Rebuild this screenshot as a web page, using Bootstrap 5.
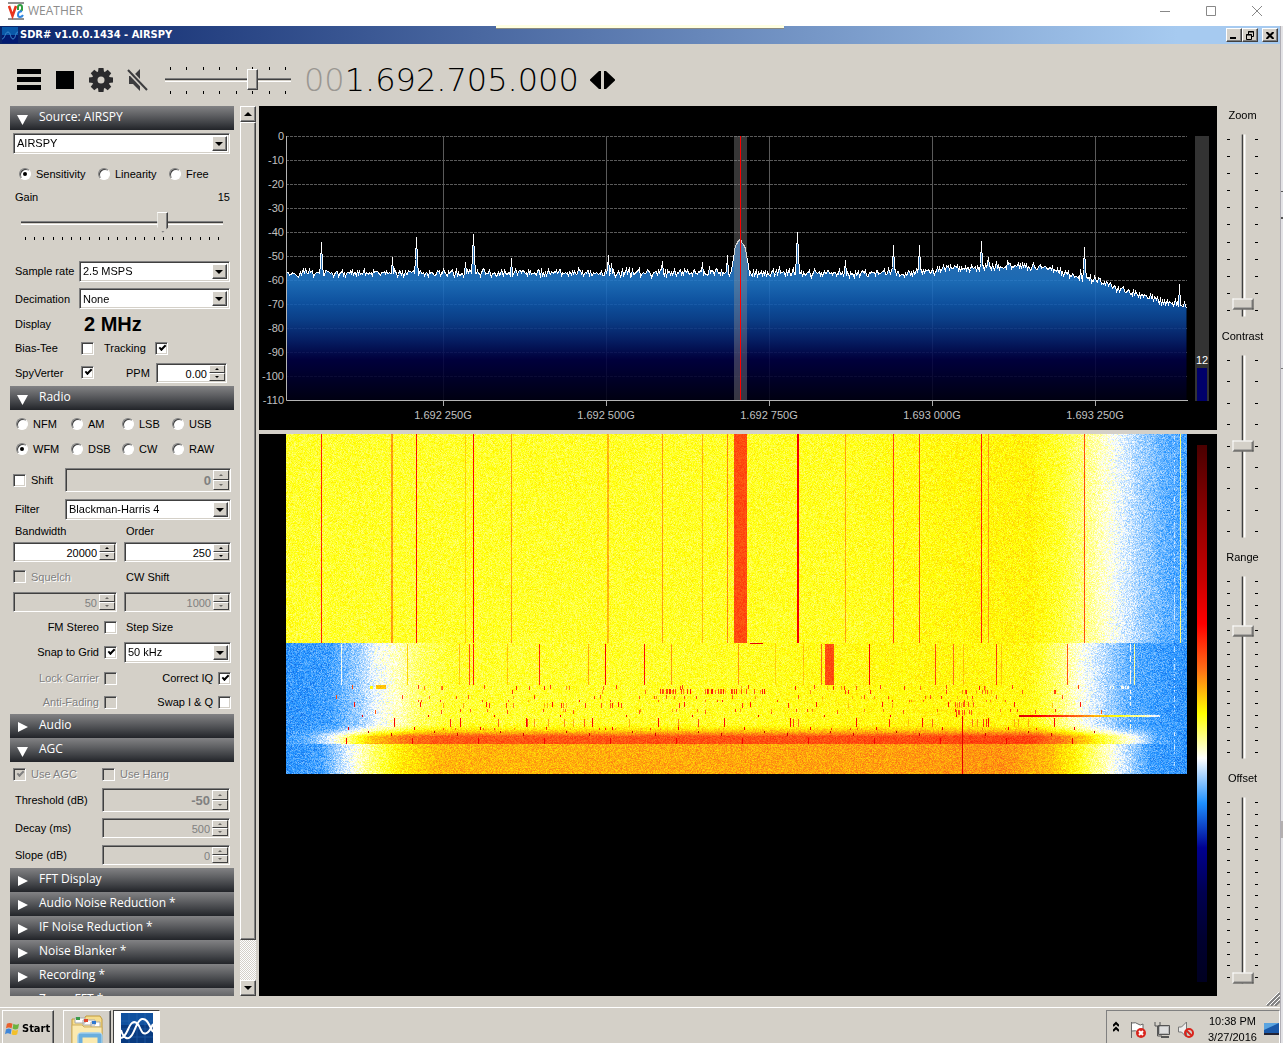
<!DOCTYPE html>
<html lang="en">
<head>
<meta charset="utf-8">
<meta name="viewport" content="width=device-width, initial-scale=1">
<title>WEATHER</title>
<link href="https://cdn.jsdelivr.net/npm/bootstrap@5.3.0/dist/css/bootstrap.min.css" rel="stylesheet">
<style>
:root{--face:#d4d0c8;--mid:#808080;--dark:#404040}
body{font:11px/14px "Liberation Sans",Arial,sans-serif;color:#000;background:var(--face);height:100vh;overflow:hidden}
button{padding:0;border:0;background:none;color:inherit}
.fit{min-width:0;min-height:0}
/* outer viewer window */
.viewer-bar{height:26px;background:#fff;color:#8c8c8c;padding:0 20px 4px 8px;font:12px/16px "Open Sans",sans-serif}
.viewer-bar button{width:46px;display:flex;justify-content:center}
.viewer-bar .wbtns{margin-right:-17px}
.notch{height:4px;width:288px;background:#ffffe1;border-bottom:1px solid #8a8a80;top:-1px;z-index:2}
.edge{width:3px;background:linear-gradient(#e3e3e6 165px,#555 165px 166px,#e3e3e6 166px 191px,#555 191px 193px,#e3e3e6 193px 342px,#777 342px 343px,#e3e3e6 343px 795px,#b4b0b0 795px 812px,#e3e3e6 812px);border-left:1px solid #b0aeb4}
/* application frame */
.app-bar{height:18px;background:linear-gradient(90deg,#0a246a,#a6caf0 92%);color:#fff;font:bold 11px/18px "DejaVu Sans Condensed","DejaVu Sans",sans-serif;padding:0 2px}
.raised{background:var(--face);border:1px solid;border-color:#fff var(--dark) var(--dark) #fff;box-shadow:inset -1px -1px var(--mid)}
.app-bar .raised{width:16px;height:14px;display:flex;align-items:center;justify-content:center}
.toolbar-row{height:62px;padding:10px 16px 0 16px}
.freq{font:200 32px/36px "DejaVu Sans Light","DejaVu Sans",sans-serif}
.freq .dim{color:#9a9792}
/* sliders */
.trk{appearance:none;-webkit-appearance:none;background:none;margin:0;padding:0;height:21px;display:block;width:100%}
.trk::-webkit-slider-runnable-track{height:4px;background:linear-gradient(#808080 1px,#404040 1px 2px,#d4d0c8 2px 3px,#fff 3px)}
.trk::-webkit-slider-thumb{-webkit-appearance:none;width:11px;height:21px;margin-top:-9px;background:var(--face);border:1px solid;border-color:#fff var(--dark) var(--dark) #fff;box-shadow:inset -1px -1px var(--mid)}
.trk.pointed::-webkit-slider-thumb{clip-path:polygon(0 0,100% 0,100% 75%,50% 100%,0 75%)}
.ticks{display:flex;justify-content:space-between}
.ticks i{display:block;background:#000;width:1px;height:3px}
.vol{width:126px}
.vol .ticks{padding:0 5px}
.side-sliders{width:63px;padding-right:12px}
.vgroup{height:221px}
.vgroup label{height:18px;line-height:18px;margin-bottom:10px}
.vtrack{height:182px;grid-template-columns:4px 23px 4px}
.vtrack .trk{width:182px;transform:rotate(-90deg);justify-self:center;align-self:center}
.vtrack.long{height:186px}
.vtrack.long .trk{width:186px}
.vtrack .trk::-webkit-slider-thumb{border-color:#fff #fff var(--dark) var(--dark);box-shadow:inset 1px -1px var(--mid)}
.vtrack .ticks{flex-direction:column;padding:5px 0}
.vtrack .ticks i{width:3px;height:1px}
/* side panel */
.side{width:224px;margin-left:10px}
.sect{height:24px;flex:none;display:flex;align-items:center;gap:11px;padding:0 7px 3px;color:#fff;font:12px/18px "Open Sans","Noto Sans",sans-serif;background:linear-gradient(#828284,#626366 35%,#404246 70%,#222429);width:100%}
.sect svg{width:11px;height:11px;margin-top:5px}
.pane{display:grid;grid-template-columns:minmax(0,1fr);padding:0 4px 0 3px;flex:none}
.pane>div{display:flex;align-items:center;min-height:0}
.src{grid-template-rows:26px 36px 10px 54px 30px 25px 26px 22px 27px}
.rad{grid-template-rows:28px 22px 40px 18px 25px 18px 31px 20px 30px 20px 32px 16px;padding:0 3px 4px 3px}
.agc{grid-template-rows:24px 28px 28px 26px}
.c1{width:104px;margin-right:7px;flex:none}
.lb{padding-left:2px;white-space:nowrap}
.lw66{width:66px}.lw52{width:52px}.lw89{width:89px}.lw68{width:68px}
.lppm{width:62px;padding-left:32px}
.ppm{margin-right:3px}
.off{color:#808080;text-shadow:1px 1px #fff}
.sunk{border:1px solid;border-color:#808080 #fff #fff #808080;box-shadow:inset 1px 1px #404040,inset -1px -1px var(--face);background:#fff}
.combo{position:relative;height:21px;flex:1 1 0;min-width:0}
.combo select{appearance:none;-webkit-appearance:none;border:0;background:none;font:inherit;color:#000;width:100%;height:100%;padding:0 20px 0 3px;display:block}
.combo::before{content:"";position:absolute;right:2px;top:2px;bottom:2px;width:15px;background:var(--face);border:1px solid;border-color:#fff var(--dark) var(--dark) #fff;box-shadow:inset -1px -1px var(--mid);pointer-events:none}
.combo::after{content:"";position:absolute;right:6px;top:8px;border:4px solid transparent;border-top-color:#000;border-bottom:0;pointer-events:none}
.spin{height:20px;flex:1 1 0;min-width:0;display:flex;padding:1px}
.spin.tall{height:24px}
.spin input{border:0;background:none;flex:1 1 0;min-width:0;text-align:right;font:inherit;padding:2px 2px 0 2px;color:#000}
.spin.tall input{font-weight:bold;font-size:13px}
.spin.dis{background:var(--face)}
.spin.dis input{color:#808080}
.spin div{width:16px;display:flex;flex-direction:column}
.spin button{flex:1;display:flex;align-items:center;justify-content:center;background:var(--face);border:1px solid;border-color:#fff var(--dark) var(--dark) #fff}
.spin button::before{content:"";border:2px solid transparent;border-bottom-color:#000;border-top:0}
.spin button+button::before{border:2px solid transparent;border-top-color:#000;border-bottom:0}
.spin.dis button::before{opacity:.5}
.cb,.rb{appearance:none;-webkit-appearance:none;margin:0;flex:none;display:block}
.cb{width:13px;height:13px;border:1px solid;border-color:#808080 #fff #fff #808080;box-shadow:inset 1px 1px #404040,inset -1px -1px var(--face);background:#fff}
.cb:disabled{background:var(--face)}
.cb:checked::before{content:"";display:block;width:7px;height:4px;margin:2px 0 0 3px;border:solid #000;border-width:0 0 2px 2px;transform:rotate(-45deg)}
.cb:disabled:checked::before{border-color:#808080}
.rb{width:12px;height:12px;border-radius:50%;background:#fff;border:1px solid;border-color:#808080 #fff #fff #808080;box-shadow:inset 1px 1px #404040}
.rb:checked::before{content:"";display:block;width:4px;height:4px;margin:3px;border-radius:50%;background:#000}
.opt{display:flex;align-items:center;gap:5px}
.track-opt{gap:9px;margin-left:10px}
.modes{display:grid!important;grid-template-columns:55px 51px 50px 1fr;padding-left:3px}
.gains{display:grid!important;grid-template-columns:79px 71px 1fr;padding-left:6px}
.big{font:bold 20px/24px "Liberation Sans",Arial,sans-serif;padding-left:5px}
.gain{padding:10px 7px 0 8px}
.sbar{width:16px;margin:0 3px 0 6px;background:repeating-conic-gradient(#fff 0 25%,var(--face) 0 50%) 0 0/2px 2px}
.sbar .raised{width:16px;display:flex;align-items:center;justify-content:center}
.sbar button{height:16px;flex:none}
.sthumb{height:818px;flex:0 1 auto}
/* displays */
.fall{background:#000;margin-top:4px;padding-left:27px}
.fall canvas{width:100%;display:block;image-rendering:pixelated}
.pal{width:10px;margin:11px 10px 14px 10px;background:linear-gradient(#4a0000,#750000,#9f0000,#c60000,#f00,#fe6d16,#ff0,#fff,#1e90ff,#000091,#000050,#000030,#000020)}
.spec{display:block;width:100%;height:auto;background:#000}
.spec text{fill:#c0c0c0;font:11px "Liberation Sans",Arial,sans-serif}
/* taskbar */
.foot{height:11px;position:relative}
.foot svg{position:absolute;right:0;bottom:1px}
.task{height:36px;border-top:1px solid #fff;padding:2px 0 0 2px;overflow:hidden}
.task>.raised{height:38px;flex:none}
.start{width:52px;font:bold 11px/36px "DejaVu Sans Condensed","DejaVu Sans",sans-serif;padding:0 2px;gap:2px}
.t1{width:48px;margin-left:9px}
.t2{width:47px;margin-left:2px;background:#fff;border:1px solid;border-color:#404040 #fff #fff #404040;height:38px}
.tray{height:38px;border:1px solid;border-color:#808080 #fff #fff #808080;gap:7px;padding-left:6px;width:174px}
.tray svg{margin-top:10px;flex:none}
.clock{line-height:16px;padding-top:2px;margin-left:6px}
</style>
</head>
<body class="d-flex flex-column">
<header class="viewer-bar d-flex align-items-center flex-shrink-0">
  <svg width="16" height="18" viewBox="0 0 16 18" aria-hidden="true"><path d="M0 1h16M0 17h16" stroke="#222" stroke-width="1"/><path d="M1 4l3.500 10L8 4" fill="none" stroke="#e8341c" stroke-width="2.500"/><path d="M10 8V5q0-2 2-2t2 2v3l-2 1" fill="none" stroke="#2f9e3f" stroke-width="2"/><path d="M14 9l-3 1q-1 1-1 3t2 2 3-2" fill="none" stroke="#2f86e0" stroke-width="2"/></svg>
  <span class="ms-1 me-auto">WEATHER</span>
  <span class="d-flex wbtns">
  <button aria-label="Minimize"><svg width="10" height="10"><path d="M0 5.500h10" stroke="#888"/></svg></button>
  <button aria-label="Maximize"><svg width="10" height="10"><path d="M.5.5h9v9h-9z" fill="none" stroke="#888"/></svg></button>
  <button aria-label="Close"><svg width="10" height="10"><path d="M0 0l10 10M10 0L0 10" stroke="#888"/></svg></button>
  </span>
</header>
<div class="d-flex flex-fill fit">
<div class="d-flex flex-column flex-fill fit position-relative">
  <div class="notch position-absolute start-50 translate-middle-x"></div>
  <div class="app-bar d-flex align-items-center flex-shrink-0">
    <svg width="16" height="16" viewBox="0 0 16 16" aria-hidden="true"><path fill="#0a58a8" d="M0 0h16v8H0z"/><path fill="#021a70" d="M0 8h16v8H0z"/><path d="M0 12C3 12 3 5 6 5s2 7 5 7 2-7 5-7" fill="none" stroke="#3d8ad0" stroke-width="1"/></svg>
    <span class="me-auto lb">SDR# v1.0.0.1434 - AIRSPY</span>
    <button class="raised" aria-label="Minimize"><svg width="8" height="8"><path fill="#000" d="M0 6h6v2H0z"/></svg></button>
    <button class="raised" aria-label="Restore"><svg width="9" height="9"><path d="M2.500 3V.5h5v5H6M2 1h6M.5 3.500h5v5h-5zM0 4h6" fill="none" stroke="#000"/></svg></button>
    <button class="raised ms-1" aria-label="Close"><svg width="8" height="7"><path d="M.5 0l7 7M7.500 0l-7 7" stroke="#000" stroke-width="2"/></svg></button>
  </div>
  <div class="toolbar-row d-flex align-items-center flex-shrink-0">
    <button aria-label="Menu"><svg class="d-block" width="26" height="22"><path d="M1 0h24v5H1zM1 8h24v5H1zM1 16h24v5H1z"/></svg></button>
    <button aria-label="Stop" style="margin-left:14px"><svg class="d-block" width="18" height="18"><path d="M0 0h18v18H0z"/></svg></button>
    <button aria-label="Settings" style="margin-left:14px"><svg class="d-block" width="26" height="26" viewBox="-13 -13 26 26"><g fill="#2b2b2d"><circle r="9"/><g id="tooth"><path d="M-3-8l.5-4h5L3-8zM-3 8l.5 4h5L3 8z"/><path d="M-8-3l-4 .5v5L-8 3zM8-3l4 .5v5L8 3z"/></g><use href="#tooth" transform="rotate(45)"/></g><circle r="3.500" fill="#d4d0c8"/></svg></button>
    <button aria-label="Mute" style="margin-left:13px"><svg class="d-block" width="22" height="24" viewBox="0 0 22 24"><path d="M2 8h4l7-7v22l-7-7H2z" fill="#3c3c3e"/><path d="M0 1l20 21" stroke="#d4d0c8" stroke-width="5"/><path d="M1 2l19 20" stroke="#3c3c3e" stroke-width="2"/></svg></button>
    <div class="vol" style="margin-left:16px"><div class="ticks" data-n="8"></div><input class="trk" type="range" min="0" max="7" value="5" aria-label="Volume"><div class="ticks" data-n="8"></div></div>
    <div class="freq" style="margin-left:13px"><span class="dim">00</span>1.692.705.000</div>
    <button aria-label="Step tuning" style="margin-left:11px"><svg class="d-block" width="25" height="18"><path d="M11 0v18h-2L0 9.500v-1L9 0zM14 0v18h2l9-8.500v-1L16 0z"/></svg></button>
  </div>
  <main class="d-flex flex-fill fit">
    <aside class="side d-flex flex-column overflow-hidden flex-shrink-0">
      <button class="sect" data-open="1">Source: AIRSPY</button>
      <div class="pane src">
        <div><span class="combo sunk"><select aria-label="Source"><option>AIRSPY</option></select></span></div>
        <div class="gains"><label class="opt"><input class="rb" type="radio" name="g" checked>Sensitivity</label><label class="opt"><input class="rb" type="radio" name="g">Linearity</label><label class="opt"><input class="rb" type="radio" name="g">Free</label></div>
        <div class="justify-content-between"><label class="lb" for="gain">Gain</label><span>15</span></div>
        <div class="gain d-block"><input class="trk pointed" id="gain" type="range" min="0" max="21" value="15"><div class="ticks px-1 pt-1" data-n="22"></div></div>
        <div><label class="lb lw66" for="sr">Sample rate</label><span class="combo sunk"><select id="sr"><option>2.5 MSPS</option></select></span></div>
        <div><label class="lb lw66" for="de">Decimation</label><span class="combo sunk"><select id="de"><option>None</option></select></span></div>
        <div><span class="lb lw66">Display</span><span class="big">2 MHz</span></div>
        <div><label class="lb lw68" for="bt">Bias-Tee</label><input class="cb" type="checkbox" id="bt"><label class="opt track-opt">Tracking<input class="cb" type="checkbox" checked></label></div>
        <div><label class="lb lw68" for="sv">SpyVerter</label><input class="cb" type="checkbox" id="sv" checked><label class="lppm" for="ppm">PPM</label><span class="spin sunk ppm"><input id="ppm" value="0.00"><div><button aria-label="Up"></button><button aria-label="Down"></button></div></span></div>
      </div>
      <button class="sect" data-open="1">Radio</button>
      <div class="pane rad">
        <div class="modes"><label class="opt"><input class="rb" type="radio" name="m">NFM</label><label class="opt"><input class="rb" type="radio" name="m">AM</label><label class="opt"><input class="rb" type="radio" name="m">LSB</label><label class="opt"><input class="rb" type="radio" name="m">USB</label></div>
        <div class="modes"><label class="opt"><input class="rb" type="radio" name="m" checked>WFM</label><label class="opt"><input class="rb" type="radio" name="m">DSB</label><label class="opt"><input class="rb" type="radio" name="m">CW</label><label class="opt"><input class="rb" type="radio" name="m">RAW</label></div>
        <div><label class="opt lw52"><input class="cb" type="checkbox">Shift</label><span class="spin tall dis sunk"><input value="0" disabled aria-label="Shift"><div><button aria-label="Up"></button><button aria-label="Down"></button></div></span></div>
        <div><label class="lb lw52" for="fi">Filter</label><span class="combo sunk"><select id="fi"><option>Blackman-Harris 4</option></select></span></div>
        <div><label class="lb c1" for="bw">Bandwidth</label><label class="lb" for="or">Order</label></div>
        <div><span class="c1 d-flex"><span class="spin sunk"><input id="bw" value="20000"><div><button aria-label="Up"></button><button aria-label="Down"></button></div></span></span><span class="spin sunk"><input id="or" value="250"><div><button aria-label="Up"></button><button aria-label="Down"></button></div></span></div>
        <div><label class="opt c1 off"><input class="cb" type="checkbox" disabled>Squelch</label><label class="lb" for="cw">CW Shift</label></div>
        <div><span class="c1 d-flex"><span class="spin dis sunk"><input value="50" disabled aria-label="Squelch"><div><button aria-label="Up"></button><button aria-label="Down"></button></div></span></span><span class="spin dis sunk"><input id="cw" value="1000" disabled><div><button aria-label="Up"></button><button aria-label="Down"></button></div></span></div>
        <div><label class="opt c1 justify-content-end">FM Stereo<input class="cb" type="checkbox"></label><label class="lb" for="ss">Step Size</label></div>
        <div><label class="opt c1 justify-content-end">Snap to Grid<input class="cb" type="checkbox" checked></label><span class="combo sunk"><select id="ss"><option>50 kHz</option></select></span></div>
        <div><label class="opt c1 justify-content-end off">Lock Carrier<input class="cb" type="checkbox" disabled></label><label class="opt ms-auto">Correct IQ<input class="cb" type="checkbox" checked></label></div>
        <div><label class="opt c1 justify-content-end off">Anti-Fading<input class="cb" type="checkbox" disabled></label><label class="opt ms-auto">Swap I &amp; Q<input class="cb" type="checkbox"></label></div>
      </div>
      <button class="sect">Audio</button>
      <button class="sect" data-open="1">AGC</button>
      <div class="pane agc">
        <div><label class="opt off lw89"><input class="cb" type="checkbox" checked disabled>Use AGC</label><label class="opt off"><input class="cb" type="checkbox" disabled>Use Hang</label></div>
        <div><label class="lb lw89" for="th">Threshold (dB)</label><span class="spin tall dis sunk"><input id="th" value="-50" disabled><div><button aria-label="Up"></button><button aria-label="Down"></button></div></span></div>
        <div><label class="lb lw89" for="dc">Decay (ms)</label><span class="spin dis sunk"><input id="dc" value="500" disabled><div><button aria-label="Up"></button><button aria-label="Down"></button></div></span></div>
        <div><label class="lb lw89" for="sl">Slope (dB)</label><span class="spin dis sunk"><input id="sl" value="0" disabled><div><button aria-label="Up"></button><button aria-label="Down"></button></div></span></div>
      </div>
      <button class="sect">FFT Display</button>
      <button class="sect">Audio Noise Reduction *</button>
      <button class="sect">IF Noise Reduction *</button>
      <button class="sect">Noise Blanker *</button>
      <button class="sect">Recording *</button>
      <button class="sect">Zoom FFT *</button>
    </aside>
    <div class="sbar d-flex flex-column flex-shrink-0">
      <button class="raised" aria-label="Scroll up"><svg width="8" height="4"><path d="M0 4l4-4 4 4z"/></svg></button>
      <div class="raised sthumb"></div>
      <button class="raised mt-auto" aria-label="Scroll down"><svg width="8" height="4"><path d="M0 0l4 4 4-4z"/></svg></button>
    </div>
    <section class="d-flex flex-column flex-fill fit">
      <svg class="spec flex-shrink-0" id="spec" viewBox="0 0 958 324" role="img" aria-label="Spectrum"></svg>
      <div class="fall d-flex flex-fill fit">
        <div class="flex-fill fit"><canvas id="fall" width="901" height="340"></canvas></div>
        <div class="pal flex-shrink-0"></div>
      </div>
    </section>
    <div class="side-sliders flex-shrink-0">
      <div class="vgroup d-flex flex-column align-items-center"><label for="v1">Zoom</label><div class="vtrack d-grid"><div class="ticks" data-n="11"></div><input class="trk" id="v1" type="range" value="4"><div class="ticks align-items-end" data-n="11"></div></div></div>
      <div class="vgroup d-flex flex-column align-items-center"><label for="v2">Contrast</label><div class="vtrack d-grid"><div class="ticks" data-n="9"></div><input class="trk" id="v2" type="range" value="50"><div class="ticks align-items-end" data-n="9"></div></div></div>
      <div class="vgroup d-flex flex-column align-items-center"><label for="v3">Range</label><div class="vtrack d-grid"><div class="ticks" data-n="15"></div><input class="trk" id="v3" type="range" max="14" value="10"><div class="ticks align-items-end" data-n="15"></div></div></div>
      <div class="vgroup d-flex flex-column align-items-center"><label for="v4">Offset</label><div class="vtrack long d-grid"><div class="ticks" data-n="16"></div><input class="trk" id="v4" type="range" value="0"><div class="ticks align-items-end" data-n="16"></div></div></div>
    </div>
  </main>
  <div class="foot flex-shrink-0"><svg width="14" height="14"><path d="M1 14L14 1M5 14l9-9M9 14l5-5" stroke="#808080" stroke-width="2"/><path d="M0 13L13 0M4 13l10-10M8 13l6-6" stroke="#fff"/></svg></div>
  <footer class="task d-flex flex-shrink-0">
    <button class="raised start d-flex"><svg width="15" height="15" viewBox="0 0 16 16" style="margin-top:10px" aria-hidden="true"><path fill="#e8602c" d="M2 3q3-2 6 0L7 8Q4 6 1 8z"/><path fill="#6cb33f" d="M9 3q3 2 6 0l-1 5q-3 2-6 0z"/><path fill="#3f86d8" d="M1 9q3-2 6 0l-1 5q-3-2-6 0z"/><path fill="#f2c02c" d="M8 9q3 2 6 0l-1 5q-3 2-6 0z"/></svg>Start</button>
    <button class="raised t1 d-flex justify-content-center" aria-label="File manager"><svg width="36" height="36" viewBox="0 0 36 36"><path fill="#f5dc8c" stroke="#c09a3c" d="M3 8h12l2-3h14l2 3v28H3z"/><path fill="#fff" stroke="#aaa" d="M6 7h10v5H6zM14 9h12v5H14zM22 11h9v5h-9z"/><path fill="#3a9a4a" d="M7 6h4v3H7z"/><path fill="#e0442c" d="M15 8h4v3h-4z"/><path fill="#2f78d0" d="M23 10h4v3h-4z"/><path fill="#fbeab0" stroke="#d0b060" d="M3 14h10l2 2h18v20H3z"/><path fill="none" stroke="#6aaede" stroke-width="5" d="M11 37V26q0-2 2-2h16q2 0 2 2v11"/><path fill="none" stroke="#b9dcf4" d="M9 36V24q0-2 2-2h20q2 0 2 2v12"/></svg></button>
    <button class="t2 d-flex justify-content-center" aria-label="SDR#"><svg width="32" height="34" viewBox="0 0 32 34"><path fill="#083a80" d="M0 2h32v32H0z"/><path fill="#1560b4" d="M0 2h32v12H0z" opacity=".6"/><path d="M8 2v32M16 2v32M24 2v32M0 10h32M0 18h32M0 26h32" stroke="#2c6cb4" opacity=".5"/><path d="M0 19C2 27 7 30 11 24S16 9 21 8s7 6 11 13M0 27c6-1 7-12 11-15s7 2 9 7 7 6 12-6" fill="none" stroke="#fff" stroke-width="2"/></svg></button>
    <div class="tray d-flex ms-auto">
      <svg width="6" height="12" aria-hidden="true"><path d="M0 5l3-3 3 3M0 10l3-3 3 3" fill="none" stroke="#000" stroke-width="2"/></svg>
      <svg class="ms-1" width="17" height="18" aria-hidden="true"><path d="M1.500 1v16M2 2q4-1 6 1t5 0v8q-3 2-5 0T2 10" fill="#fff" stroke="#666"/><circle cx="11" cy="12" r="5" fill="#d8241c"/><path d="M9 10l4 4m0-4l-4 4" stroke="#fff" stroke-width="2"/></svg>
      <svg width="17" height="18" aria-hidden="true"><path fill="#b8b8b8" stroke="#555" d="M4.500 4.500h11v9h-11z"/><path fill="#ddd" d="M6 6h8v6H6z"/><path d="M7 16h8" stroke="#555" stroke-width="2"/><path d="M1 1v4h5V1M3.500 5v10H8" fill="none" stroke="#555"/></svg>
      <svg width="17" height="18" aria-hidden="true"><path fill="#eee" stroke="#777" d="M.5 6h3l5-5v15l-5-5h-3z"/><circle cx="11" cy="12" r="4" fill="none" stroke="#d8241c" stroke-width="2"/><path d="M8 9l6 6" stroke="#d8241c" stroke-width="2"/></svg>
      <div class="clock text-center">10:38 PM<br>3/27/2016</div>
      <svg width="16" height="16" aria-hidden="true"><path fill="#1a58a8" d="M0 2h15v11H0z"/><path fill="#5aa4e0" d="M0 2h15L0 9z"/><path fill="#223" d="M0 12h15v2H0z"/></svg>
    </div>
  </footer>
</div>
<div class="edge flex-shrink-0"></div>
</div>
<script src="https://cdn.jsdelivr.net/npm/bootstrap@5.3.0/dist/js/bootstrap.bundle.min.js"></script>
<script>
// slider tick marks and section arrows
document.querySelectorAll('.ticks').forEach(t => { t.innerHTML = '<i></i>'.repeat(+t.dataset.n); });
document.querySelectorAll('.sect').forEach(b => {
  const d = b.dataset.open ? 'M0 1h11L5.500 11z' : 'M1 0v10l10-5z';
  b.insertAdjacentHTML('afterbegin', '<svg aria-hidden="true"><path fill="#fff" d="' + d + '"/></svg>');
});
let seed = 1434;
const rnd = () => (seed = (seed * 1664525 + 1013904223) >>> 0) / 4294967296;
const lerp = (pts, x) => {
  for (let i = 1; i < pts.length; i++) if (x <= pts[i][0]) {
    const a = pts[i - 1], b = pts[i]; return a[1] + (b[1] - a[1]) * (x - a[0]) / (b[0] - a[0]);
  }
  return pts[pts.length - 1][1];
};
// spectrum, plot origin 27,30 and 901 x 264
(() => {
  const base = [[0,167],[620,167],[660,163],[735,160],[765,162],[784,169],[810,174],[834,184],[864,192],[884,197],[901,199]];
  const y = [];
  for (let x = 0; x <= 900; x++) y[x] = lerp(base, x) + (rnd() + rnd() - 1) * 5 - 0.5 - (rnd() > .96 ? 3 : 0);
  const peaks = [[35,136],[106,151],[130,131],[179,156],[187,128],[225,152],[322,149],[325,157],[376,155],[416,156],[423,160],[441,149],[511,126],[559,154],[607,139],[633,139],[695,135],[702,151],[798,141],[893,178]];
  for (const [x, v] of peaks) { y[x] = Math.min(y[x], v); y[x-1] = Math.min(y[x-1], v + 22); y[x+1] = Math.min(y[x+1], v + 22); }
  for (let x = 445; x <= 463; x++) y[x] = Math.min(y[x], lerp([[445,164],[447,150],[449,138],[452,134],[454,132],[456,136],[459,141],[461,152],[463,166]], x) + rnd() * 2);
  const yy = y.map(v => Math.round(v - 30));
  let line = '', s = '';
  yy.forEach((v, x) => { line += (x ? 'L' : 'M') + (x + 27.5) + ' ' + (v + 30.5); });
  for (let i = 0; i <= 11; i++) {
    const gy = 30.5 + i * 24;
    if (i < 11) s += '<path d="M27 ' + gy + 'H928" stroke="#5a5a5a" stroke-dasharray="3 1"/>';
    s += '<text x="25" y="' + (34 + i * 24) + '" text-anchor="end">' + (i ? -i * 10 : 0) + '</text>';
  }
  [[184.5,'1.692 250G'],[347.5,'1.692 500G'],[510.5,'1.692 750G'],[673.5,'1.693 000G'],[836.5,'1.693 250G']].forEach(([x, t]) => {
    s += '<path d="M' + x + ' 30V294" stroke="#5a5a5a"/><path d="M' + x + ' 294v6" stroke="#aaa"/><text x="' + (x - .5) + '" y="313" text-anchor="middle">' + t + '</text>';
  });
  s += '<defs><linearGradient id="fg" gradientUnits="userSpaceOnUse" x1="0" y1="126" x2="0" y2="294"><stop offset="0" stop-color="#3a80c8"/><stop offset=".3" stop-color="#1f78cc"/><stop offset=".42" stop-color="#105cb4"/><stop offset=".52" stop-color="#0c479a"/><stop offset=".65" stop-color="#06206e"/><stop offset=".76" stop-color="#000044"/><stop offset="1" stop-color="#000014"/></linearGradient></defs>';
  s += '<path d="' + line + 'V294H27z" fill="url(#fg)" fill-opacity=".88"/><path d="' + line + '" fill="none" stroke="#fff" stroke-width="1" shape-rendering="crispEdges"/>';
  s += '<path d="M27.500 30V294.500H929" fill="none" stroke="#b4b4b4"/>';
  s += '<path d="M475 30h13v264h-13z" fill="#909090" fill-opacity=".38"/><path d="M481 30h1v264h-1z" fill="#f00"/>';
  s += '<path d="M936 30h14v265h-14z" fill="#333"/><path d="M938 262h10v33h-10z" fill="#00006a"/><text x="943" y="258" text-anchor="middle" style="fill:#fff">12</text>';
  document.getElementById('spec').innerHTML = s;
})();
// waterfall
(() => {
  const pal = [[0,0,32],[0,0,48],[0,0,80],[0,0,145],[30,144,255],[255,255,255],[255,255,0],[254,109,22],[255,0,0],[198,0,0],[159,0,0],[117,0,0],[74,0,0]];
  const W = 901, H = 340, X0 = 286, Y0 = 434;
  const P1 = [[286,5.82],[850,5.86],[960,6],[1030,6.05],[1060,5.8],[1090,5.4],[1115,5],[1140,4.6],[1165,4.3],[1187,4.15]];
  const A = [[286,4.05],[330,4.15],[360,4.6],[375,4.95],[395,5.2],[420,5.6],[450,5.8],[700,5.85],[950,6],[1030,5.95],[1055,5.6],[1085,5],[1110,4.6],[1130,4.25],[1187,4.05]];
  const B = [[286,4.1],[312,4.4],[332,5],[350,5.6],[370,6.3],[400,6.9],[440,7.2],[900,7.3],[1030,7.4],[1060,6.9],[1090,6.2],[1110,5.6],[1135,5],[1155,4.3],[1187,4]];
  const C = [[286,4.05],[320,4.15],[340,4.7],[355,5.1],[375,5.6],[400,6.1],[440,6.5],[900,6.65],[1000,6.75],[1050,6.45],[1075,6],[1095,5.5],[1115,5],[1135,4.5],[1150,4.15],[1187,4.05]];
  const f = new Float32Array(W * H);
  for (let y = 0; y < H; y++) for (let x = 0; x < W; x++) {
    const X = x + X0, Y = y + Y0; let v;
    if (Y < 643) v = lerp(P1, X);
    else if (Y < 722) v = lerp(A, X);
    else if (Y < 744) { const t = Math.min(1, (Y - 722) / 14); v = lerp(A, X) * (1 - t * t) + lerp(B, X) * t * t; }
    else v = lerp(C, X);
    f[y * W + x] = v + (rnd() + rnd() - 1) * .38;
  }
  const box = (x, y, w, h, v) => { for (let j = y; j < y + h; j++) for (let i = x; i < x + w; i++) { const a = i - X0, b = j - Y0; if (a >= 0 && a < W && b >= 0 && b < H) f[b * W + a] = v + (rnd() - .5) * .4; } };
  [[321,1,7.7],[391,2,6.7],[416,1,7.9],[473,1,8],[511,1,6.7],[465,1,6.3],[607,2,6.5],[662,1,6.7],[702,1,6.5],[727,1,6.8],[734,13,7.3],[797,2,8.2],[845,1,6.6],[893,1,7.4],[919,1,7.3],[981,1,7.7],[988,1,6.7],[1084,1,7.3],[1180,1,5.5]].forEach(([x, w, v]) => box(x, 434, w, 209, v));
  [[341,1,5],[407,1,6.3],[459,1,6.4],[469,1,7.2],[473,1,7.8],[507,1,6.4],[539,1,7.6],[588,1,6.6],[605,1,8],[644,1,7.9],[671,1,6.7],[738,1,6.7],[775,1,6.3],[803,1,6.4],[821,1,7],[825,9,7.3],[869,1,8],[935,1,7.4],[953,1,7],[963,1,6.4],[996,1,7.5],[1001,1,6.4],[1067,1,7.2],[1134,1,5.4]].forEach(([x, w, v]) => box(x, 644, w, 41, v));
  box(750, 643, 13, 1, 8.4); box(376, 685, 10, 4, 6.4); box(370, 686, 3, 3, 6);
  // short bursts: y, height, phase, level
  [[685,4,22,7.4],[695,4,6,7.2],[702,5,24,7.8],[710,4,45,7.2],[715,2,32,8.2],[718,9,64,8],[727,3,18,8.2],[731,2,38,9],[733,3,61,8.8],[738,6,16,8.2]].forEach(([y, h, p, v]) => { for (let x = 330 + p; x < 1110; x += 66) box(x, y, 1, h, v); });
  for (let i = 0; i < 190; i++) { const r = [[686,4],[690,4],[696,3],[700,2],[703,5],[709,3],[719,8],[728,2]][i % 8]; box(400 + Math.floor(rnd() * 660), r[0], 1, r[1], 6.4 + rnd() * 1.3); }
  for (let i = 0; i < 34; i++) box(660 + Math.floor(rnd() * 105), 689, 1, 5, 6.9 + rnd());
  for (let i = 0; i < 12; i++) box(955 + Math.floor(rnd() * 24), i % 2 ? 702 : 710, 1, 5, 7.2);
  for (let i = 0; i < 8; i++) box(1108 + Math.floor(rnd() * 36), 686, 1, 3, 5);
  for (let X = 1019; X < 1160; X++) box(X, 715, 1, 2, 8.6 - (X - 1019) / 140 * 3.8);
  for (let Y = 434; Y < 774; Y += 2) { if (rnd() > .5) box(1130, Y, 1, 2, Y < 643 ? 4.9 : 5); if (rnd() > .6) box(1174, Y, 1, 2, 4.7); }
  box(962, 716, 1, 58, 8.4);
  const c = document.getElementById('fall').getContext('2d'), im = c.createImageData(W, H);
  for (let i = 0; i < f.length; i++) {
    const v = Math.max(0, Math.min(11.99, f[i])), k = Math.floor(v), t = v - k;
    for (let j = 0; j < 3; j++) im.data[i * 4 + j] = pal[k][j] + (pal[k + 1][j] - pal[k][j]) * t;
    im.data[i * 4 + 3] = 255;
  }
  c.putImageData(im, 0, 0);
})();
</script>
</body>
</html>
